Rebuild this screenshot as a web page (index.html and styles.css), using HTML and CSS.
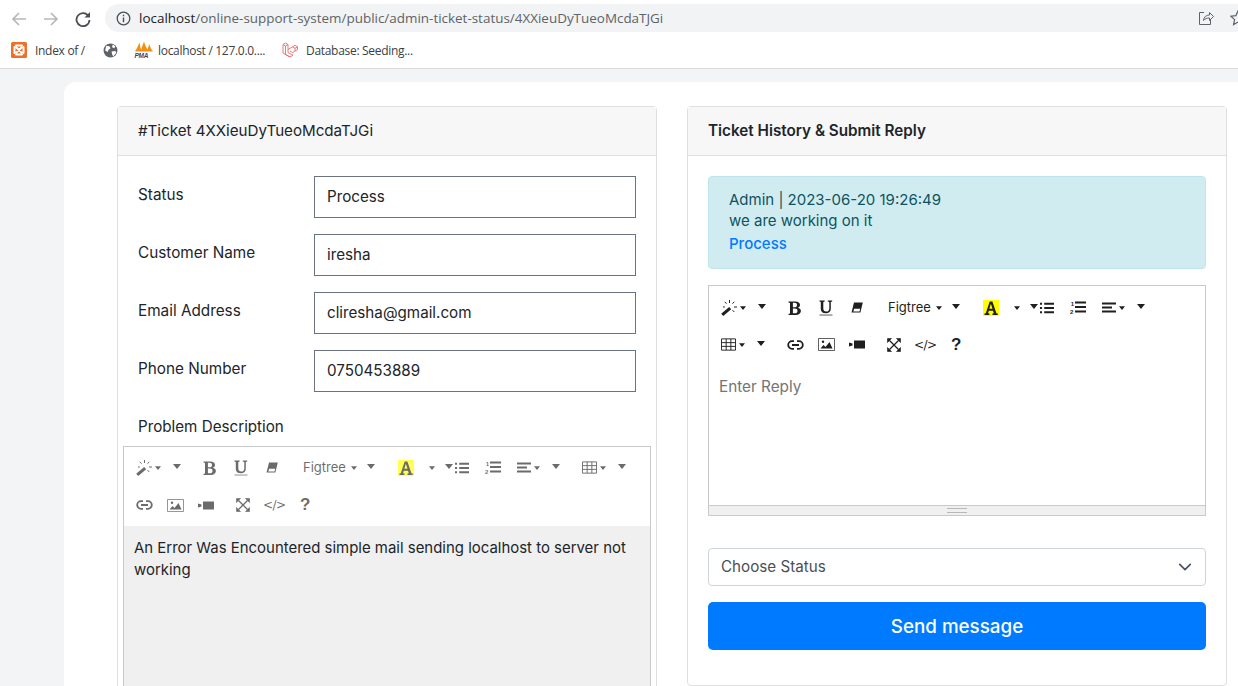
FILE: index.html
```html
<!DOCTYPE html>
<html lang="en">
<head>
<meta charset="utf-8">
<title>Ticket</title>
<link rel="stylesheet" href="styles.css">
</head>
<body>
<svg class="defs" width="0" height="0" aria-hidden="true">
  <symbol id="i-wand" viewBox="0 0 16 16"><path d="M0.200 13.800l8-6.800 2 2.200-8 6.800z" fill="currentColor"/><path d="M8.500 0v3M13.300 1.800l-1.800 1.900M16 7h-3M13.300 12l-1.800-1.800M3.700 1.800l1.800 1.900M3.800 7H2" stroke="currentColor" stroke-width="1" fill="none"/></symbol>
  <symbol id="i-caret" viewBox="0 0 8 5"><path d="M0 0h8L4 5z" fill="currentColor"/></symbol>
  <symbol id="i-bold" viewBox="0 0 14 14"><path fill-rule="evenodd" d="M0.500 0.500h6.700c3 0 4.800 1.300 4.800 3.400 0 1.500-1 2.500-2.400 2.900 1.900.3 3.300 1.500 3.300 3.300 0 2.400-2 3.900-5.100 3.900H0.500v-1.100l1.500-.3V1.900l-1.500-.3zM4.900 1.800v4.500h1.700c1.500 0 2.400-.8 2.400-2.300 0-1.400-.8-2.200-2.300-2.200zM4.900 7.600v4.600h2c1.700 0 2.600-.8 2.600-2.300 0-1.500-1-2.300-2.800-2.300z" fill="currentColor"/></symbol>
  <symbol id="i-under" viewBox="0 0 14 16"><path d="M0.500 0.500h5.200v1.100l-1.400.3v6.700c0 2 1 3 2.900 3 2 0 3.100-1.100 3.100-3.100V1.900l-1.500-.3V.5h4.400v1.100l-1.400.3v6.800c0 2.900-1.800 4.500-4.900 4.500-3.200 0-5.100-1.500-5.100-4.300V1.900l-1.300-.3z" fill="currentColor"/><rect x="0.500" y="14.400" width="13" height="1.300" fill="currentColor" opacity=".55"/></symbol>
  <symbol id="i-eraser" viewBox="0 0 12 11"><path fill-rule="evenodd" d="M3 0.500h8.800L9.400 10.500H0.500zM3.200 6.800L2.300 9.500h6.200l.7-2.700z" fill="currentColor"/></symbol>
  <symbol id="i-a" viewBox="0 0 16 16"><rect width="16" height="16" fill="#ff0"/><path d="M6.700 1.500h2.700l4 11.700 1.300.3V15H9.500v-1.500l1.300-.3-.8-2.500H5.800l-.8 2.500 1.400.3V15H1.500v-1.500l1.300-.3zM6.300 8.700h3.200L7.900 3.800z" fill="currentColor" fill-rule="evenodd"/></symbol>
  <symbol id="i-ul" viewBox="0 0 15 12"><path d="M4.500 0.500h10.500v2H4.500zM4.500 5h10.500v2H4.500zM4.500 9.500h10.500v2H4.500zM0 0.500h2.200v2H0zM0 5h2.200v2H0zM0 9.500h2.200v2H0z" fill="currentColor"/></symbol>
  <symbol id="i-align" viewBox="0 0 14 11"><path d="M0 0.500h14v2H0zM0 4.500h10v2H0zM0 8.500h14v2H0z" fill="currentColor"/></symbol>
  <symbol id="i-table" viewBox="0 0 16 13"><path d="M0.500 0.500h15v12h-15zM0.500 4.500h15M0.500 8.500h15M5.500 0.500v12M10.500 0.500v12" stroke="currentColor" fill="none"/></symbol>
  <symbol id="i-link" viewBox="0 0 17 10"><path d="M7 1.200H5a3.800 3.800 0 0 0 0 7.600h2M10 1.200h2a3.800 3.800 0 0 1 0 7.600h-2M5 5h7" stroke="currentColor" stroke-width="1.800" fill="none"/></symbol>
  <symbol id="i-image" viewBox="0 0 17 13"><path d="M0.500 0.500h16v12h-16z" stroke="currentColor" fill="none" opacity=".7"/><path d="M2.500 10.500l3-3.500 2 2 4-5 3 6.500z" fill="currentColor"/><circle cx="5" cy="3.800" r="1.200" fill="currentColor"/></symbol>
  <symbol id="i-video" viewBox="0 0 16 9"><path d="M5 0.500h11v8H5zM0 2.500l3.500 1v2L0 6.500z" fill="currentColor"/></symbol>
  <symbol id="i-expand" viewBox="0 0 14 14"><path d="M2.500 2.500l9 9M11.500 2.500l-9 9" stroke="currentColor" stroke-width="1.300"/><path d="M0.500 0.500h4L.5 4.500zM13.500 0.500v4l-4-4zM0.500 13.500v-4l4 4zM13.500 13.500h-4l4-4z" fill="currentColor" stroke="currentColor" stroke-width=".6"/></symbol>
  <symbol id="i-back" viewBox="0 0 16 16"><path d="M15 8H2.500M8 2L2 8l6 6" stroke="currentColor" stroke-width="1.700" fill="none"/></symbol>
  <symbol id="i-fwd" viewBox="0 0 16 16"><path d="M1 8h12.500M8 2l6 6-6 6" stroke="currentColor" stroke-width="1.700" fill="none"/></symbol>
</svg>

<header class="browser">
  <div class="navrow">
    <svg class="nav nav-off" width="16" height="16"><use href="#i-back"/></svg>
    <svg class="nav nav-off" width="16" height="16"><use href="#i-fwd"/></svg>
    <svg class="nav nav-on" width="16" height="16" viewBox="0 0 16 16"><path d="M13.500 5.200A6.500 6.500 0 1 0 14.500 9" stroke="currentColor" stroke-width="1.800" fill="none"/><path d="M15 1v5.500H9.500z" fill="currentColor"/></svg>
    <div class="omni">
      <svg class="omni-info" width="15" height="15" viewBox="0 0 15 15"><circle cx="7.500" cy="7.500" r="6.300" stroke="#4b4f54" stroke-width="1.300" fill="none"/><path d="M6.800 6.500h1.400v4.700H6.800zM6.800 3.800h1.400v1.400H6.800z" fill="#4b4f54"/></svg>
      <span class="url"><span class="url-host">localhost</span>/online-support-system/public/admin-ticket-status/4XXieuDyTueoMcdaTJGi</span>
      <span class="omni-actions">
        <svg width="16" height="16" viewBox="0 0 16 16"><path d="M6 2.500H1.500v12h11V10" stroke="#5f6368" fill="none"/><path d="M5.500 10.500c.3-3.500 2.800-5.500 6-5.500V2.500L15.500 6.500 11.500 10.500V8c-2.500 0-4.500.7-6 2.500z" stroke="#5f6368" fill="none"/></svg>
        <svg width="16" height="16" viewBox="0 0 16 16"><path d="M8 1l2.100 4.600 5 .6-3.700 3.400 1 4.900L8 12.100 3.600 14.500l1-4.900L.9 6.200l5-.6z" stroke="#5f6368" stroke-width="1.200" fill="none"/></svg>
      </span>
    </div>
  </div>
  <div class="bookmarks">
    <span class="bm bm-xampp">
      <svg width="16" height="16" viewBox="0 0 16 16"><rect width="16" height="16" rx="1.500" fill="#ea7127"/><path d="M5 3.500h6M5 12.500h6M3.500 5v6M12.500 5v6M5.500 5.500l5 5M10.500 5.500l-5 5" stroke="#fff" stroke-width="2" fill="none" stroke-linecap="round"/></svg>
      <span>Index of /</span>
    </span>
    <span class="bm bm-globe">
      <svg width="15" height="15" viewBox="0 0 14 14"><circle cx="7" cy="7" r="6.500" fill="#5f6368"/><path d="M3 2.500l3 .5 1 2-2 1.500-.5 2L2 7zM9 1.500l2.500 1.500-1 2-2-1zM8 8l3.500-.5 1 1.500-3 3.500-1-2z" fill="#fff"/></svg>
    </span>
    <span class="bm bm-pma">
      <svg width="20" height="18" viewBox="0 0 20 18"><path d="M1 10.500C2.500 8 4 5 5.500 1.500 6 5 6.500 7 7.200 8.500 8 6 8.800 3.500 10 .5c1 3 2 6 3.500 8 .7-1.700 1.200-3.500 1.700-5.500 1 3 2.300 5.500 3.800 7.500z" fill="#f29111"/><text x="0.500" y="17" font-size="6.500" font-weight="700" font-style="italic" font-family="Liberation Sans" fill="#3a3f6e">PMA</text></svg>
      <span>localhost / 127.0.0....</span>
    </span>
    <span class="bm bm-laravel">
      <svg width="16" height="16" viewBox="0 0 16 16"><path d="M1 2.500L3.500 1l2.500 1.500v8L11 13.300 8 15 3.500 12.500 1 11zM1 2.500l2.500 1.500L6 2.500M3.500 4v8.500L8 15M6 7.500l4.500-2.700L13 3.300l2.500 1.500v2.800l-5 3L8 9M10.500 4.800L13 6.300v2.800M13 6.300l2.500-1.500" stroke="#f0686a" stroke-width=".9" fill="none"/></svg>
      <span>Database: Seeding...</span>
    </span>
  </div>
</header>

<main class="page">
  <section class="card">
    <article class="panel panel-long">
      <h2 class="panel-head panel-head-plain">#Ticket 4XXieuDyTueoMcdaTJGi</h2>
      <div class="panel-body">
        <div class="field"><label class="field-label">Status</label><input class="field-input" value="Process"></div>
        <div class="field"><label class="field-label">Customer Name</label><input class="field-input" value="iresha"></div>
        <div class="field"><label class="field-label">Email Address</label><input class="field-input" value="cliresha@gmail.com"></div>
        <div class="field"><label class="field-label">Phone Number</label><input class="field-input" value="0750453889"></div>
        <div class="desc-label">Problem Description</div>
      </div>
      <div class="editor editor-off">
        <div class="toolbar">
          <span class="tool w67"><svg class="ic" width="16" height="16"><use href="#i-wand"/></svg><svg class="car c1" width="6" height="4"><use href="#i-caret"/></svg><svg class="car c2" width="8" height="5"><use href="#i-caret"/></svg></span>
          <span class="tool w31"><svg class="ic" width="14" height="14"><use href="#i-bold"/></svg></span>
          <span class="tool w32"><svg class="ic" width="14" height="16"><use href="#i-under"/></svg></span>
          <span class="tool w37"><svg class="ic" width="12" height="11"><use href="#i-eraser"/></svg></span>
          <span class="tool w95"><span class="fontname">Figtree</span><svg class="car c3" width="6" height="4"><use href="#i-caret"/></svg><svg class="car c2b" width="8" height="5"><use href="#i-caret"/></svg></span>
          <span class="tool w57"><svg class="ic" width="16" height="16"><use href="#i-a"/></svg><svg class="car c4" width="6" height="4"><use href="#i-caret"/></svg><svg class="car c5" width="8" height="5"><use href="#i-caret"/></svg></span>
          <span class="tool w30"><svg class="ic" width="14" height="12"><use href="#i-ul"/></svg></span>
          <span class="tool w32"><svg class="ic" width="16" height="13" viewBox="0 0 16 13"><path d="M5 0.500h11v2H5zM5 5h11v2H5zM5 9.500h11v2H5z" fill="currentColor"/><text x="0.800" y="5" font-size="6" font-weight="700" font-family="Liberation Sans" fill="currentColor">1</text><text x="0" y="12.500" font-size="6" font-weight="700" font-family="Liberation Sans" fill="currentColor">2</text></svg></span>
          <span class="tool w65"><svg class="ic" width="14" height="11"><use href="#i-align"/></svg><svg class="car c1" width="6" height="4"><use href="#i-caret"/></svg><svg class="car c2" width="8" height="5"><use href="#i-caret"/></svg></span>
          <span class="tool w66"><svg class="ic" width="15" height="13"><use href="#i-table"/></svg><svg class="car c1" width="6" height="4"><use href="#i-caret"/></svg><svg class="car c2" width="8" height="5"><use href="#i-caret"/></svg></span>
          <span class="tool w31"><svg class="ic" width="17" height="10"><use href="#i-link"/></svg></span>
          <span class="tool w31"><svg class="ic" width="17" height="13"><use href="#i-image"/></svg></span>
          <span class="tool w38"><svg class="ic" width="16" height="9"><use href="#i-video"/></svg></span>
          <span class="tool w28"><svg class="ic" width="14" height="14"><use href="#i-expand"/></svg></span>
          <span class="tool w37 codetag"><span>&lt;/&gt;</span></span>
          <span class="tool w31 helpmark"><span>?</span></span>
        </div>
        <div class="editor-text">An Error Was Encountered simple mail sending localhost to server not working</div>
      </div>
    </article>

    <article class="panel">
      <h2 class="panel-head">Ticket History &amp; Submit Reply</h2>
      <div class="panel-body panel-body-reply">
        <div class="alert">
          <div>Admin | 2023-06-20 19:26:49</div>
          <div>we are working on it</div>
          <div class="alert-status">Process</div>
        </div>
        <div class="editor editor-on">
          <div class="toolbar">
            <span class="tool w67"><svg class="ic" width="16" height="16"><use href="#i-wand"/></svg><svg class="car c1" width="6" height="4"><use href="#i-caret"/></svg><svg class="car c2" width="8" height="5"><use href="#i-caret"/></svg></span>
            <span class="tool w31"><svg class="ic" width="14" height="14"><use href="#i-bold"/></svg></span>
            <span class="tool w32"><svg class="ic" width="14" height="16"><use href="#i-under"/></svg></span>
            <span class="tool w37"><svg class="ic" width="12" height="11"><use href="#i-eraser"/></svg></span>
            <span class="tool w95"><span class="fontname">Figtree</span><svg class="car c3" width="6" height="4"><use href="#i-caret"/></svg><svg class="car c2b" width="8" height="5"><use href="#i-caret"/></svg></span>
            <span class="tool w57"><svg class="ic" width="16" height="16"><use href="#i-a"/></svg><svg class="car c4" width="6" height="4"><use href="#i-caret"/></svg><svg class="car c5" width="8" height="5"><use href="#i-caret"/></svg></span>
            <span class="tool w30"><svg class="ic" width="14" height="12"><use href="#i-ul"/></svg></span>
            <span class="tool w32"><svg class="ic" width="16" height="13" viewBox="0 0 16 13"><path d="M5 0.500h11v2H5zM5 5h11v2H5zM5 9.500h11v2H5z" fill="currentColor"/><text x="0.800" y="5" font-size="6" font-weight="700" font-family="Liberation Sans" fill="currentColor">1</text><text x="0" y="12.500" font-size="6" font-weight="700" font-family="Liberation Sans" fill="currentColor">2</text></svg></span>
            <span class="tool w65"><svg class="ic" width="14" height="11"><use href="#i-align"/></svg><svg class="car c1" width="6" height="4"><use href="#i-caret"/></svg><svg class="car c2" width="8" height="5"><use href="#i-caret"/></svg></span>
            <span class="tool w66"><svg class="ic" width="15" height="13"><use href="#i-table"/></svg><svg class="car c1" width="6" height="4"><use href="#i-caret"/></svg><svg class="car c2" width="8" height="5"><use href="#i-caret"/></svg></span>
            <span class="tool w31"><svg class="ic" width="17" height="10"><use href="#i-link"/></svg></span>
            <span class="tool w31"><svg class="ic" width="17" height="13"><use href="#i-image"/></svg></span>
            <span class="tool w38"><svg class="ic" width="16" height="9"><use href="#i-video"/></svg></span>
            <span class="tool w28"><svg class="ic" width="14" height="14"><use href="#i-expand"/></svg></span>
            <span class="tool w37 codetag"><span>&lt;/&gt;</span></span>
            <span class="tool w31 helpmark"><span>?</span></span>
          </div>
          <div class="editor-area">Enter Reply</div>
          <div class="editor-status"><span class="grip"></span></div>
        </div>
        <div class="select">
          <span>Choose Status</span>
          <svg width="14" height="14" viewBox="0 0 16 16"><path d="M2 5l6 6 6-6" stroke="#4b5563" stroke-width="2" fill="none" stroke-linecap="round" stroke-linejoin="round"/></svg>
        </div>
        <button class="send" type="button">Send message</button>
      </div>
    </article>
  </section>
</main>
</body>
</html>
```

FILE: styles.css
```css
* { box-sizing: border-box; }
html, body { margin: 0; height: 686px; overflow: hidden; }
body { background: #f3f4f6; font-family: Inter, "Liberation Sans", sans-serif; color: #212529; }
.defs { position: absolute; }

.browser { height: 69px; background: #fff; border-bottom: 1px solid #dcdcdc; font-family: "Open Sans", "Liberation Sans", sans-serif; }
.navrow { height: 36px; display: flex; align-items: center; padding: 1px 0 0 11px; }
.nav { flex: none; margin-right: 16px; }
.nav-off { color: #b6b8bb; }
.nav-on { color: #4b4f54; margin-right: 14px; }
.omni { flex: 1; height: 28px; background: #f1f3f4; border-radius: 14px 0 0 14px; display: flex; align-items: center; padding-left: 11px; margin-top: -1px; }
.omni-info { flex: none; margin-right: 8px; }
.url { font-size: 13.450px; color: #5f6368; white-space: nowrap; flex: 1; }
.url-host { color: #202124; }
.omni-actions { display: flex; gap: 16px; margin-right: -8px; }
.bookmarks { height: 28px; display: flex; align-items: center; padding-left: 11px; font-size: 12px; letter-spacing: -.3px; color: #3c4043; }
.bm { display: inline-flex; align-items: center; }
.bm-xampp { gap: 8px; width: 92px; }
.bm-globe { width: 31px; }
.bm-pma { gap: 4px; width: 148px; }
.bm-laravel { gap: 8px; }

.page { padding: 13px 0 0 64px; }
.card { width: 1300px; height: 800px; background: #fff; border-radius: 12px 0 0 0; padding: 24px 0 0 53px; display: flex; gap: 30px; align-items: flex-start; }
.panel { width: 540px; flex: none; border: 1px solid #dfdfdf; border-radius: 4px; background: #fff; }
.panel-long { height: 700px; }
.panel-head { margin: 0; height: 49px; background: #f7f7f7; border-bottom: 1px solid #dfdfdf; padding: 0 20px 2px; display: flex; align-items: center; font-size: 15.250px; font-weight: 600; color: #212529; }
.panel-head-plain { font-weight: 400; font-size: 15.150px; }
.panel-body { padding: 20px 20px 0; }
.field { height: 42px; display: flex; margin-bottom: 16px; }
.field-label { width: 176px; font-size: 15.300px; line-height: 22px; padding-top: 8px; color: #212529; flex: none; }
.field-input { flex: 1; min-width: 0; height: 42px; border: 1px solid #6b7280; border-radius: 0; padding: 0 12px 2px; font: 15.200px Inter, "Liberation Sans", sans-serif; color: #212529; background: #fff; }
.desc-label { font-size: 15.200px; line-height: 22px; height: 33px; padding-top: 8px; }

.editor { border: 1px solid #c9c9c9; }
.editor-off { margin: 5px 5px 0; height: 400px; }
.toolbar { display: flex; flex-wrap: wrap; background: #fff; color: #1f1f1f; }
.editor-off .toolbar { padding: 2px 0 2px 12px; }
.editor-off .tool > * { opacity: .66; }
.editor-on .toolbar { padding: 3px 0 0 12px; }
.tool { height: 37px; flex: none; display: inline-flex; align-items: center; font-size: 13px; }
.editor-off .tool { height: 37.500px; }
.ic { flex: none; }
.car { flex: none; margin-top: -3px; }
.w67 { width: 67px; } .w31 { width: 31px; } .w32 { width: 32px; } .w37 { width: 37px; } .w95 { width: 95px; }
.w57 { width: 57px; } .w30 { width: 30px; } .w65 { width: 65px; } .w66 { width: 66px; } .w38 { width: 38px; } .w28 { width: 28px; }
.c1 { margin-left: 3px; margin-top: 0; }
.c2 { margin-left: 12px; }
.c2b { margin-left: 10px; }
.c3 { margin-left: 5px; margin-top: 0; }
.c4 { margin-left: 15px; margin-top: 0; }
.c5 { margin-left: 10px; }
.fontname { font-size: 13px; margin-top: -2px; }
.codetag { font-family: "DejaVu Sans", sans-serif; font-size: 12px; letter-spacing: -.5px; margin-left: -1px; margin-right: 1px; }
.helpmark { font-family: "Liberation Sans", sans-serif; font-size: 17px; font-weight: 700; margin-left: -1px; }
.editor-text { background: #f0f0f0; padding: 11px 10px 10px; font-size: 14.940px; line-height: 22px; height: 320px; color: #212529; }

.panel-body-reply { padding: 20px 20px 35px; }
.alert { height: 93px; background: #d1ecf1; border: 1px solid #bee5eb; border-radius: 4px; padding: 12px 20px; font-size: 15px; line-height: 21px; color: #0c5460; margin-bottom: 16px; }
.alert-status { color: #007bff; font-weight: 500; margin-top: 2px; }
.editor-on { height: 231px; display: flex; flex-direction: column; margin-bottom: 32px; }
.editor-area { flex: 1; padding: 13px 10px 0; font-size: 15.300px; line-height: 22px; color: #757575; }
.editor-status { height: 10px; background: #f0f0f0; border-top: 1px solid #c9c9c9; display: flex; align-items: center; justify-content: center; flex: none; }
.grip { width: 20px; height: 5px; border-top: 1px solid #b8b8b8; border-bottom: 1px solid #b8b8b8; }
.select { height: 38px; border: 1px solid #ced4da; border-radius: 4px; display: flex; align-items: center; justify-content: space-between; padding: 0 13px 2px 12px; font-size: 15.200px; color: #495057; margin-bottom: 16px; }
.select svg { margin-top: 2px; }
.send { display: block; width: 100%; height: 48px; background: #007bff; border: 0; border-radius: 5px; color: #fff; font: 500 18.800px Inter, "Liberation Sans", sans-serif; }
```
